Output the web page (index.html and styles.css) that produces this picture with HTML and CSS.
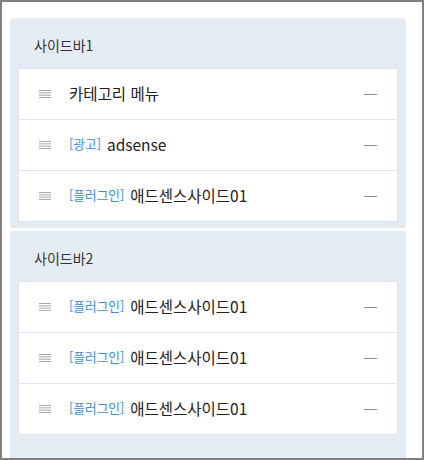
FILE: index.html
```html
<!DOCTYPE html>
<html lang="ko">
<head>
    <meta charset="UTF-8">
    <meta name="viewport" content="width=device-width, initial-scale=1.0">
    <title>사이드바 관리</title>
    <link rel="stylesheet" href="styles.css">
</head>
<body>

    <div class="frame">
        <div class="sidebar">
            <h2 class="sidebar-title">사이드바1</h2>
            <ul class="module-list">
                <li class="module">
                    <svg class="handle" width="12" height="8" viewBox="0 0 12 8"><path d="M0 0.5H12M0 2.83H12M0 5.17H12M0 7.5H12" stroke="#a8a8a8" stroke-width="1"/></svg>
                    <span class="name">카테고리 메뉴</span>
                    <span class="remove"></span>
                </li>
                <li class="module">
                    <svg class="handle" width="12" height="8" viewBox="0 0 12 8"><path d="M0 0.5H12M0 2.83H12M0 5.17H12M0 7.5H12" stroke="#a8a8a8" stroke-width="1"/></svg>
                    <span class="tag">[광고]</span>
                    <span class="name">adsense</span>
                    <span class="remove"></span>
                </li>
                <li class="module">
                    <svg class="handle" width="12" height="8" viewBox="0 0 12 8"><path d="M0 0.5H12M0 2.83H12M0 5.17H12M0 7.5H12" stroke="#a8a8a8" stroke-width="1"/></svg>
                    <span class="tag">[플러그인]</span>
                    <span class="name">애드센스사이드01</span>
                    <span class="remove"></span>
                </li>
            </ul>
        </div>

        <div class="sidebar last">
            <h2 class="sidebar-title">사이드바2</h2>
            <ul class="module-list">
                <li class="module">
                    <svg class="handle" width="12" height="8" viewBox="0 0 12 8"><path d="M0 0.5H12M0 2.83H12M0 5.17H12M0 7.5H12" stroke="#a8a8a8" stroke-width="1"/></svg>
                    <span class="tag">[플러그인]</span>
                    <span class="name">애드센스사이드01</span>
                    <span class="remove"></span>
                </li>
                <li class="module">
                    <svg class="handle" width="12" height="8" viewBox="0 0 12 8"><path d="M0 0.5H12M0 2.83H12M0 5.17H12M0 7.5H12" stroke="#a8a8a8" stroke-width="1"/></svg>
                    <span class="tag">[플러그인]</span>
                    <span class="name">애드센스사이드01</span>
                    <span class="remove"></span>
                </li>
                <li class="module">
                    <svg class="handle" width="12" height="8" viewBox="0 0 12 8"><path d="M0 0.5H12M0 2.83H12M0 5.17H12M0 7.5H12" stroke="#a8a8a8" stroke-width="1"/></svg>
                    <span class="tag">[플러그인]</span>
                    <span class="name">애드센스사이드01</span>
                    <span class="remove"></span>
                </li>
            </ul>
        </div>
    </div>

</body>
</html>
```

FILE: styles.css
```css
html, body {
    margin: 0;
    padding: 0;
}
body {
    font-family: "Noto Sans CJK KR", "Noto Sans", sans-serif;
    background-color: #ffffff;
    color: #222;
}
.frame {
    width: 424px;
    height: 460px;
    box-sizing: border-box;
    border: 2px solid #808080;
    padding: 16px 16px 0 8px;
    overflow: hidden;
    display: flex;
    flex-direction: column;
}
.sidebar {
    background-color: #e5ebf2;
    border-radius: 3px;
    padding: 18px 8px 6px 8px;
    margin-bottom: 3px;
    flex-shrink: 0;
}
.sidebar.last {
    flex-grow: 1;
    margin-bottom: 0;
    border-radius: 3px 3px 0 0;
}
.sidebar-title {
    margin: 0 0 12px 0;
    padding-left: 16px;
    padding-bottom: 2px;
    font-size: 14px;
    font-weight: normal;
    line-height: 18px;
    color: #333;
}
.module-list {
    list-style: none;
    margin: 0;
    padding: 0;
    background-color: #fff;
    border: 1px solid #dce3ea;
}
.module {
    display: flex;
    align-items: center;
    height: 50px;
    padding: 0 20px;
    border-top: 1px solid #dfe5eb;
}
.module:first-child {
    border-top: none;
}
.handle {
    flex-shrink: 0;
    margin-right: 18px;
}
.tag {
    font-size: 12.7px;
    color: #378de4;
    margin-right: 6px;
    padding-bottom: 3px;
}
.name {
    font-size: 15.5px;
    color: #222;
    padding-bottom: 3px;
}
.remove {
    margin-left: auto;
    width: 13px;
    height: 1px;
    background-color: #8a929b;
}
```
